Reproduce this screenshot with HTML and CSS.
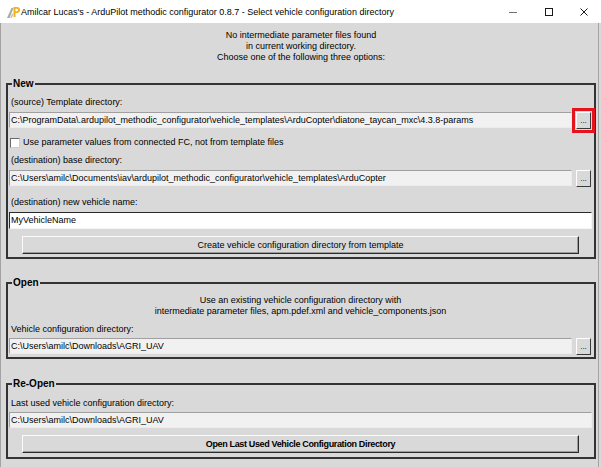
FILE: index.html
```html
<!DOCTYPE html>
<html lang="en">
<head>
<meta charset="utf-8">
<title>ArduPilot methodic configurator</title>
<link rel="stylesheet" href="styles.css">
</head>
<body>
<div class="window">
  <div class="titlebar">
    <svg class="app-icon" viewBox="0 0 13 12" aria-hidden="true">
      <polygon points="0,12 4.5,2 6.5,2 2.5,12" fill="#a8a8a8"/>
      <polygon points="3,12 5,7.5 6.5,7.5 5,12" fill="#c8c8c8"/>
      <path d="M6.5 1 H10 A3 3 0 0 1 10 7 H8.5 V11 H6.5 Z M8.5 2.8 V5.2 H9.8 A1.2 1.2 0 0 0 9.8 2.8 Z" fill="#f2b21b" fill-rule="evenodd"/>
    </svg>
    <span class="title">Amilcar Lucas's - ArduPilot methodic configurator 0.8.7 - Select vehicle configuration directory</span>
    <div class="controls">
      <span class="ctl"><svg width="10" height="10" viewBox="0 0 10 10"><line x1="0" y1="5.5" x2="8" y2="5.5" stroke="#707070" stroke-width="1"/></svg></span>
      <span class="ctl"><svg width="10" height="10" viewBox="0 0 10 10"><rect x="1.5" y="1.5" width="7" height="7" fill="none" stroke="#1a1a1a" stroke-width="1"/></svg></span>
      <span class="ctl"><svg width="10" height="10" viewBox="0 0 10 10"><path d="M1.5 1.5 L8.5 8.5 M8.5 1.5 L1.5 8.5" stroke="#1a1a1a" stroke-width="1"/></svg></span>
    </div>
  </div>
  <div class="content">
    <p class="intro">No intermediate parameter files found<br>in current working directory.<br>Choose one of the following three options:</p>

    <fieldset class="group group-new">
      <legend>New</legend>
      <div class="caption">(source) Template directory:</div>
      <div class="path-row">
        <div class="entry">C:\ProgramData\.ardupilot_methodic_configurator\vehicle_templates\ArduCopter\diatone_taycan_mxc\4.3.8-params</div>
        <button class="browse highlighted">...</button>
      </div>
      <div class="check-row"><span class="checkbox"></span><span>Use parameter values from connected FC, not from template files</span></div>
      <div class="caption cap-gap">(destination) base directory:</div>
      <div class="path-row">
        <div class="entry">C:\Users\amilc\Documents\iav\ardupilot_methodic_configurator\vehicle_templates\ArduCopter</div>
        <button class="browse">...</button>
      </div>
      <div class="caption cap-gap-lg">(destination) new vehicle name:</div>
      <div class="entry editable">MyVehicleName</div>
      <button class="action">Create vehicle configuration directory from template</button>
    </fieldset>

    <fieldset class="group group-open">
      <legend>Open</legend>
      <p class="note">Use an existing vehicle configuration directory with<br>intermediate parameter files, apm.pdef.xml and vehicle_components.json</p>
      <div class="caption cap-gap">Vehicle configuration directory:</div>
      <div class="path-row tight">
        <div class="entry">C:\Users\amilc\Downloads\AGRI_UAV</div>
        <button class="browse">...</button>
      </div>
    </fieldset>

    <fieldset class="group group-reopen">
      <legend>Re-Open</legend>
      <div class="caption">Last used vehicle configuration directory:</div>
      <div class="entry solo">C:\Users\amilc\Downloads\AGRI_UAV</div>
      <button class="action default">Open Last Used Vehicle Configuration Directory</button>
    </fieldset>
  </div>
</div>
</body>
</html>
```

FILE: styles.css
```css
* { box-sizing: border-box; }

html, body {
  margin: 0;
  padding: 0;
  background: #d9d9d9;
}

body {
  font-family: "Liberation Sans", Arial, sans-serif;
  font-size: 9px;
  line-height: 11px;
  color: #000;
}

.window {
  width: 601px;
  height: 467px;
  display: flex;
  flex-direction: column;
  background: #d9d9d9;
  overflow: hidden;
}

/* ---------- title bar ---------- */
.titlebar {
  height: 23px;
  flex: none;
  background: #fff;
  display: flex;
  align-items: center;
}

.app-icon {
  width: 13px;
  height: 12px;
  margin-left: 7px;
  margin-right: 1px;
  flex: none;
}

.title {
  flex: 1;
  white-space: nowrap;
  padding-top: 1px;
}

.controls {
  display: flex;
  height: 100%;
}

.ctl {
  width: 35px;
  display: flex;
  align-items: center;
  justify-content: center;
}

/* ---------- content ---------- */
.content {
  flex: 1;
  width: 599px;
  border-left: 1px solid #a3a3a3;
  border-right: 1px solid #a3a3a3;
  padding: 0 2px 0 5px;
}

.intro {
  margin: 7px 0 0;
  text-align: center;
}

.group {
  margin: 15px 0 0;
  padding: 7px 2px 3px 1px;
  border: 2px solid #333;
  min-inline-size: 0;
}

.group legend {
  font-size: 10px;
  font-weight: bold;
  line-height: 12px;
  padding: 0 1px;
  margin-left: 3px;
}

.group-open {
  margin-top: 18px;
  padding-top: 6px;
  padding-bottom: 2px;
}

.group-reopen {
  margin-top: 19px;
  padding-top: 8px;
  padding-bottom: 4px;
}

.caption {
  padding-left: 2px;
  white-space: nowrap;
}

.cap-gap { margin-top: 7px; }
.cap-gap-lg { margin-top: 10px; }

.note {
  margin: 0;
  text-align: center;
}

.path-row {
  margin-top: 4px;
  display: flex;
  align-items: flex-start;
  height: 17px;
}

.path-row.tight { margin-top: 3px; }

.entry {
  flex: 1;
  min-width: 0;
  height: 16px;
  border: 1px solid;
  border-color: #a0a0a0 #ececec #ececec #a0a0a0;
  background: #f1f1f1;
  padding: 0 1px;
  line-height: 14px;
  white-space: nowrap;
  overflow: hidden;
}

.entry.editable {
  margin-top: 4px;
  height: 17px;
  line-height: 15px;
  background: #fff;
  border-color: #2a2a2a #f4f4f4 #f4f4f4 #2a2a2a;
}

.entry.solo {
  margin-top: 3px;
}

.browse {
  flex: none;
  width: 15px;
  height: 17px;
  margin: 0 1px 0 4px;
  padding: 0 0 3px;
  background: #d9d9d9;
  border: 1px solid;
  border-color: #fff #3a3a3a #3a3a3a #fff;
  font-family: "Liberation Sans", Arial, sans-serif;
  font-size: 8px;
  line-height: 8px;
  color: #000;
  display: flex;
  align-items: flex-end;
  justify-content: center;
}

.browse.highlighted {
  outline: 3px solid #e5131d;
  outline-offset: 1px;
}

.check-row {
  margin-top: 8px;
  display: flex;
  align-items: center;
  height: 11px;
  white-space: nowrap;
}

.checkbox {
  width: 10px;
  height: 10px;
  flex: none;
  margin: 0 3px 0 1px;
  background: #fff;
  border: 1px solid;
  border-color: #6a6a6a #d0d0d0 #d0d0d0 #6a6a6a;
}

.action {
  display: block;
  width: calc(100% - 26px);
  height: 18px;
  margin: 7px 13px 0;
  padding: 0;
  background: #d9d9d9;
  border: 1px solid;
  border-color: #fbfbfb #2b2b2b #2b2b2b #fbfbfb;
  box-shadow: inset -1px -1px 0 #9c9c9c;
  font-family: "Liberation Sans", Arial, sans-serif;
  font-size: 9px;
  line-height: 14px;
  color: #000;
  text-align: center;
}

.action.default {
  font-weight: bold;
  letter-spacing: -0.35px;
}
```
